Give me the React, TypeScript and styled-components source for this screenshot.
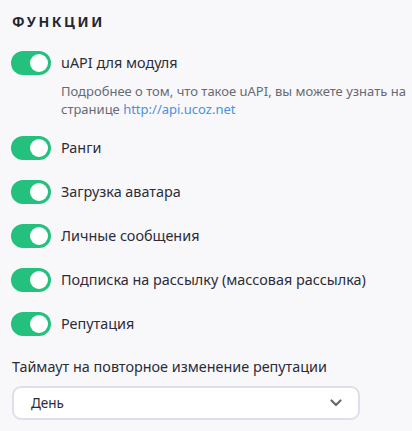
import React from "react";
import styled, { createGlobalStyle } from "styled-components";

const Global = createGlobalStyle`
  html, body { margin: 0; padding: 0; background: #f8f8fb; }
  body { font-family: "Noto Sans", "Open Sans", sans-serif; color: #2c2c38; }
`;

const Page = styled.div`
  width: 412px;
  height: 431px;
  box-sizing: border-box;
  padding: 13px 4px 0 12px;
  display: flex;
  flex-direction: column;
`;

const Title = styled.h2`
  margin: 0;
  font-size: 14px;
  line-height: 18px;
  font-weight: 700;
  letter-spacing: 2.6px;
  color: #26262e;
`;

const List = styled.div`
  display: flex;
  flex-direction: column;
  margin-top: 20px;
  gap: 20px;
`;

const Row = styled.div`
  display: flex;
  align-items: flex-start;
  gap: 10px;
`;

const Track = styled.span<{ $on: boolean }>`
  flex: none;
  width: 40px;
  height: 24px;
  border-radius: 12px;
  background: ${(p) => (p.$on ? "#24c07e" : "#c8ccd6")};
  position: relative;
  margin-left: -1px;
`;

const Knob = styled.span<{ $on: boolean }>`
  position: absolute;
  top: 3px;
  left: ${(p) => (p.$on ? "19px" : "3px")};
  width: 18px;
  height: 18px;
  border-radius: 50%;
  background: #fff;
`;

const Body = styled.div`
  display: flex;
  flex-direction: column;
`;

const Label = styled.span`
  font-size: 14.4px;
  line-height: 24px;
  color: #2c2c38;
`;

const Desc = styled.p`
  margin: 7px 0 -2px 0;
  font-size: 13px;
  line-height: 18px;
  color: #676a73;
`;

const Link = styled.a`
  color: #4a90e2;
  text-decoration: none;
`;

const FieldLabel = styled.div`
  margin-top: 21px;
  font-size: 14.4px;
  line-height: 20px;
  color: #2c2c38;
`;

const Select = styled.div`
  margin-top: 9px;
  width: 348px;
  height: 34px;
  box-sizing: border-box;
  border: 2px solid #dde0ea;
  border-radius: 9px;
  background: #fff;
  display: flex;
  align-items: center;
  justify-content: space-between;
  padding: 0 16px 0 17px;
  font-size: 13.5px;
  color: #2c2c38;
`;

const Chevron = () => (
  <svg width="12" height="8" viewBox="0 0 12 8" aria-hidden>
    <path d="M1.5 1.5 L6 6 L10.5 1.5" fill="none" stroke="#666a73" strokeWidth="2.2" strokeLinecap="round" strokeLinejoin="round" />
  </svg>
);

const Toggle = ({ on = true }: { on?: boolean }) => (
  <Track $on={on}>
    <Knob $on={on} />
  </Track>
);

const items = [
  "Ранги",
  "Загрузка аватара",
  "Личные сообщения",
  "Подписка на рассылку (массовая рассылка)",
  "Репутация",
];

export default function App() {
  return (
    <>
      <Global />
      <Page>
        <Title>ФУНКЦИИ</Title>
        <List>
          <Row>
            <Toggle />
            <Body>
              <Label>uAPI для модуля</Label>
              <Desc>
                Подробнее о том, что такое uAPI, вы можете узнать на
                <br />
                странице <Link href="#">http://api.ucoz.net</Link>
              </Desc>
            </Body>
          </Row>
          {items.map((t) => (
            <Row key={t}>
              <Toggle />
              <Label>{t}</Label>
            </Row>
          ))}
        </List>
        <FieldLabel>Таймаут на повторное изменение репутации</FieldLabel>
        <Select>
          <span>День</span>
          <Chevron />
        </Select>
      </Page>
    </>
  );
}
